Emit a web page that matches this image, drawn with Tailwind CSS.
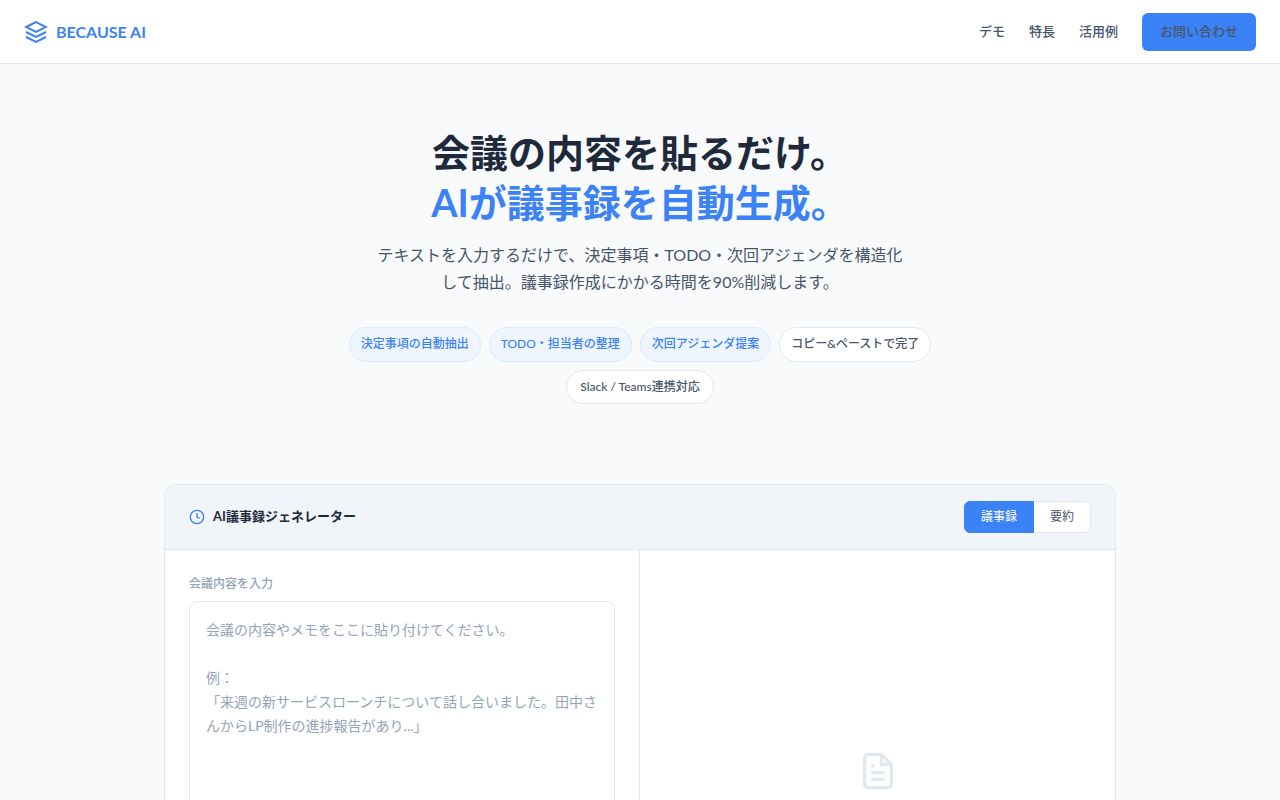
<!DOCTYPE html>
<html lang="ja">
<head>
<meta charset="utf-8">
<meta name="viewport" content="width=device-width, initial-scale=1">
<title>BECAUSE AI</title>
<script src="https://cdn.jsdelivr.net/npm/@tailwindcss/browser@4"></script>
</head>
<body class="min-h-screen bg-[#f9fafc] font-['Lato','Noto_Sans_CJK_JP',sans-serif] text-[#1e293b]">
<header class="flex h-16 items-center justify-between border-b border-slate-200 bg-white px-6">
  <a href="#" class="flex items-center gap-2 text-base font-bold text-[#3b82f6]">
    <svg class="size-6" viewBox="0 0 24 24" fill="none" stroke="currentColor" stroke-width="2" aria-hidden="true"><path d="M12 2 2 7l10 5 10-5-10-5z"/><path d="m2 17 10 5 10-5"/><path d="m2 12 10 5 10-5"/></svg>
    <span>BECAUSE AI</span>
  </a>
  <nav class="flex items-center gap-6 text-[13px] font-medium text-[#475569]">
    <a href="#demo">デモ</a>
    <a href="#features">特長</a>
    <a href="#cases">活用例</a>
    <a href="#contact" class="rounded-md bg-[#3b82f6] px-[18px] pt-2 pb-2.5 leading-5">お問い合わせ</a>
  </nav>
</header>
<main>
  <section class="px-6 pt-[63px] pb-20 text-center">
    <h1 class="text-[38px] leading-[50px] font-bold">会議の内容を貼るだけ。<br><span class="text-[#3b82f6]">AIが議事録を自動生成。</span></h1>
    <p class="mx-auto mt-3.5 max-w-[540px] text-base leading-[27px] text-[#475569]">テキストを入力するだけで、決定事項・TODO・次回アジェンダを構造化して抽出。議事録作成にかかる時間を90%削減します。</p>
    <ul class="mx-auto mt-8 flex max-w-[592px] flex-wrap justify-center gap-2 text-xs leading-5 font-medium text-[#475569]">
      <li class="rounded-full border border-blue-100 bg-[#eff5ff] px-[11px] pt-1.5 pb-[7px] text-[#3b82f6]">決定事項の自動抽出</li>
      <li class="rounded-full border border-blue-100 bg-[#eff5ff] px-[11px] pt-1.5 pb-[7px] text-[#3b82f6]">TODO・担当者の整理</li>
      <li class="rounded-full border border-blue-100 bg-[#eff5ff] px-[11px] pt-1.5 pb-[7px] text-[#3b82f6]">次回アジェンダ提案</li>
      <li class="rounded-full border border-slate-200 bg-white px-[11px] pt-1.5 pb-[7px]">コピー&amp;ペーストで完了</li>
      <li class="rounded-full border border-slate-200 bg-white px-[13px] pt-1.5 pb-1.5">Slack / Teams連携対応</li>
    </ul>
  </section>
  <section id="demo" class="mx-auto max-w-[1000px] px-6 pb-16">
    <div class="overflow-hidden rounded-xl border border-slate-200 bg-white">
      <div class="flex items-center justify-between border-b border-slate-200 bg-[#f1f4f9] px-6 py-4">
        <h2 class="flex items-center gap-2 text-[13px] font-bold">
          <svg class="size-4 text-[#3b82f6]" viewBox="0 0 24 24" fill="none" stroke="currentColor" stroke-width="2" aria-hidden="true"><circle cx="12" cy="12" r="10"/><path d="M12 6v6l4 2"/></svg>
          AI議事録ジェネレーター
        </h2>
        <div class="flex h-8 text-xs">
          <button type="button" class="rounded-l-md border border-[#3b82f6] bg-[#3b82f6] px-4 text-white">議事録</button>
          <button type="button" class="rounded-r-md border border-l-0 border-slate-200 bg-white px-4 text-[#475569]">要約</button>
        </div>
      </div>
      <div class="grid min-h-[442px] grid-cols-2">
        <div class="flex flex-col border-r border-slate-200 p-6">
          <label for="minutes" class="mb-[7px] text-xs leading-5 font-medium text-[#94a3b8]">会議内容を入力</label>
          <textarea id="minutes" class="w-full flex-1 resize-none rounded-lg border border-slate-200 bg-white p-4 text-sm leading-6 placeholder:text-[#94a3b8]" placeholder="会議の内容やメモをここに貼り付けてください。

例：
「来週の新サービスローンチについて話し合いました。田中さんからLP制作の進捗報告があり...」"></textarea>
        </div>
        <div class="flex items-center justify-center text-slate-200">
          <svg class="size-10" viewBox="0 0 24 24" fill="none" stroke="currentColor" stroke-width="2" aria-hidden="true"><path d="M14 2H6a2 2 0 0 0-2 2v16a2 2 0 0 0 2 2h12a2 2 0 0 0 2-2V8z"/><path d="M14 2v6h6M16 13H8M16 17H8M10 9H8"/></svg>
        </div>
      </div>
    </div>
  </section>
</main>
</body>
</html>
